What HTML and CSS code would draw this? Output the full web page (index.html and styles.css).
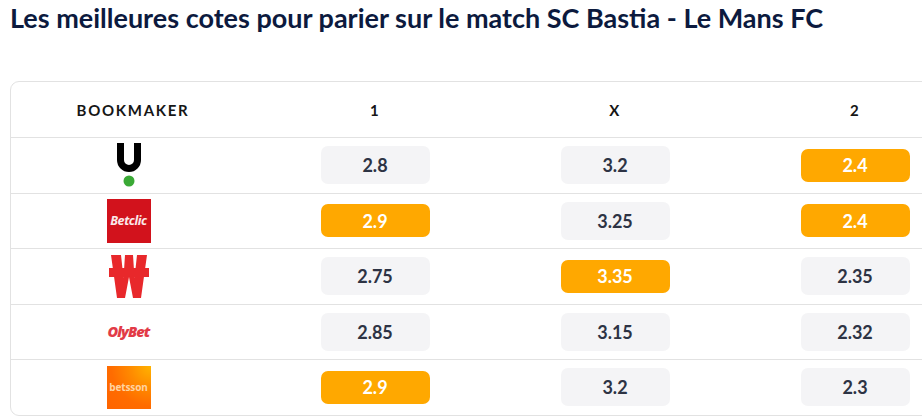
FILE: index.html
```html
<!DOCTYPE html>
<html lang="fr">
<head>
<meta charset="utf-8">
<title>Cotes SC Bastia - Le Mans FC</title>
<link rel="stylesheet" href="styles.css">
</head>
<body>
<h1 class="title">Les meilleures cotes pour parier sur le match SC Bastia - Le Mans FC</h1>
<div class="odds-table">
  <div class="row head">
    <div class="cell">BOOKMAKER</div>
    <div class="cell">1</div>
    <div class="cell">X</div>
    <div class="cell">2</div>
  </div>
  <div class="row">
    <div class="cell logo-cell">
      <svg class="logo" viewBox="0 0 44 44" width="44" height="44" aria-label="Unibet">
        <path d="M13.5,0 V17 a8.5,8.5 0 0 0 17,0 V0" fill="none" stroke="#000" stroke-width="7"/>
        <circle cx="22" cy="38" r="5.5" fill="#3aa935"/>
      </svg>
    </div>
    <div class="cell"><span class="odd">2.8</span></div>
    <div class="cell"><span class="odd">3.2</span></div>
    <div class="cell"><span class="odd best">2.4</span></div>
  </div>
  <div class="row">
    <div class="cell logo-cell"><span class="logo betclic">Betclic</span></div>
    <div class="cell"><span class="odd best">2.9</span></div>
    <div class="cell"><span class="odd">3.25</span></div>
    <div class="cell"><span class="odd best">2.4</span></div>
  </div>
  <div class="row">
    <div class="cell logo-cell">
      <svg class="logo" viewBox="0 0 44 44" width="44" height="44" aria-label="Winamax">
        <polygon fill="#e8282b" points="4,1 14,1 16.5,24 18,1 26,1 27.5,24 30,1 40,1 34,44 26,44 22,23 18,44 10,44"/>
        <rect x="2" y="14" width="40" height="9" fill="#e8282b"/>
      </svg>
    </div>
    <div class="cell"><span class="odd">2.75</span></div>
    <div class="cell"><span class="odd best">3.35</span></div>
    <div class="cell"><span class="odd">2.35</span></div>
  </div>
  <div class="row">
    <div class="cell logo-cell"><span class="logo olybet">OlyBet</span></div>
    <div class="cell"><span class="odd">2.85</span></div>
    <div class="cell"><span class="odd">3.15</span></div>
    <div class="cell"><span class="odd">2.32</span></div>
  </div>
  <div class="row">
    <div class="cell logo-cell"><span class="logo betsson">betsson</span></div>
    <div class="cell"><span class="odd best">2.9</span></div>
    <div class="cell"><span class="odd">3.2</span></div>
    <div class="cell"><span class="odd">2.3</span></div>
  </div>
</div>
</body>
</html>
```
FILE: styles.css
```css
html, body {
  overflow: hidden;
}
body {
  margin: 0;
  padding: 0 10px;
  font-family: Lato, "Open Sans", sans-serif;
  background: #fff;
  color: #1a1a1a;
}
.title {
  margin: 0;
  padding-top: 0;
  font-size: 27px;
  line-height: 36px;
  font-weight: 700;
  color: #0c1a3e;
  white-space: nowrap;
}
.odds-table {
  margin-top: 45px;
  width: 965px;
  border: 1px solid #e2e2e2;
  border-radius: 9px;
}
.row {
  display: grid;
  grid-template-columns: 244px 240px 240px 240px;
  height: 54.5px;
  border-top: 1px solid #e2e2e2;
}
.row.head {
  height: 55px;
  border-top: none;
}
.cell {
  display: flex;
  align-items: center;
  justify-content: center;
}
.head .cell {
  font-size: 15px;
  font-weight: 700;
  letter-spacing: 1.5px;
  color: #161616;
}
.head .cell:first-child {
  letter-spacing: 1.7px;
}
.logo-cell {
  padding-right: 9px;
}
.logo {
  width: 44px;
  height: 44px;
  display: flex;
  align-items: center;
  justify-content: center;
  box-sizing: border-box;
}
.betclic {
  background: #d2121c;
  color: #fbe9ea;
  font-family: "Open Sans", sans-serif;
  font-style: italic;
  font-weight: 700;
  font-size: 12.5px;
  letter-spacing: -0.4px;
}
.olybet {
  color: #e23b47;
  font-family: "Open Sans", sans-serif;
  font-style: italic;
  font-weight: 800;
  font-size: 14.5px;
  letter-spacing: -0.9px;
}
.betsson {
  height: 43px;
  background: radial-gradient(circle at 100% 0%, #ffb400 0%, #ff8a00 35%, #ff6c00 65%, #ff6400 100%);
  color: #ffd3a0;
  font-family: "Open Sans", sans-serif;
  font-weight: 700;
  font-size: 10px;
  letter-spacing: -0.1px;
}
.odd {
  width: 109px;
  height: 38px;
  border-radius: 7px;
  background: #f4f4f6;
  color: #2d3344;
  font-size: 18px;
  font-weight: 700;
  display: flex;
  align-items: center;
  justify-content: center;
}
.odd.best {
  height: 33px;
  background: #ffa800;
  color: #fff;
}
```
